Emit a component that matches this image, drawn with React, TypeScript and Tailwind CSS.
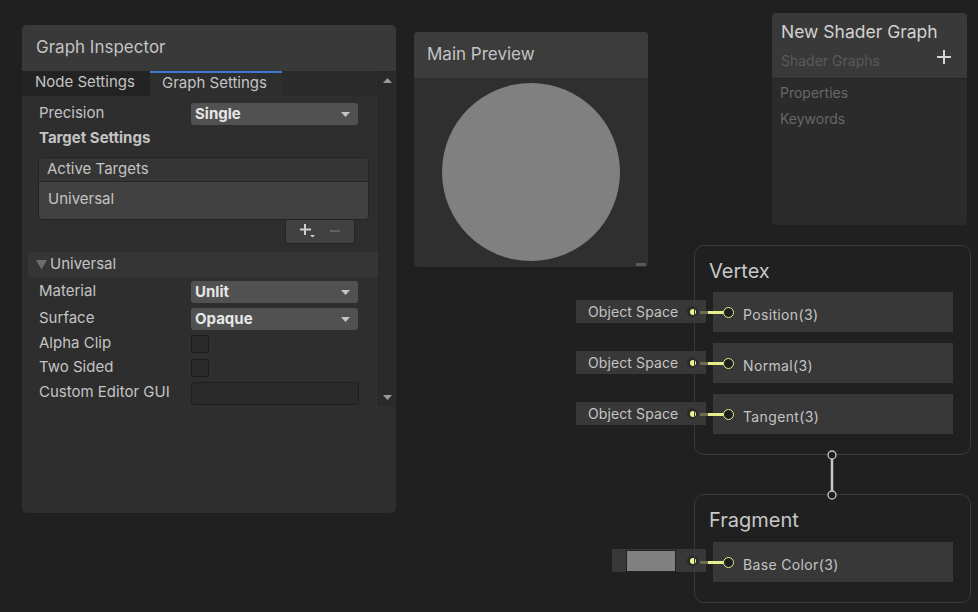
import React from 'react'

const Caret = () => (
  <svg width="9" height="5" viewBox="0 0 9 5">
    <path d="M0 0h9L4.5 5z" fill="#c4c4c4" />
  </svg>
)

function Dropdown({ value }: { value: string }) {
  return (
    <div className="flex h-[22px] w-[167px] items-center justify-between rounded-[3px] bg-[#515151] pl-[4px] pr-[8px] text-[15px] font-bold text-[#e6e6e6]">
      <span className="pt-[1px]">{value}</span>
      <Caret />
    </div>
  )
}

function Row({ label, children, className = '' }: { label: string; children: React.ReactNode; className?: string }) {
  return (
    <div className={`flex items-center pl-[17px] ${className}`}>
      <span className="-mt-[3px] w-[152px] text-[15px] leading-[18px] text-[#c4c4c4]">{label}</span>
      {children}
    </div>
  )
}

const Checkbox = () => <div className="h-[18px] w-[18px] rounded-[2px] border border-[#1c1c1c] bg-[#2a2a2a]" />

function Inspector() {
  return (
    <div className="absolute left-[22px] top-[25px] flex h-[488px] w-[374px] flex-col overflow-hidden rounded-[5px] bg-[#2e2e2e]">
      <div className="flex h-[46px] items-center bg-[#393939] pl-[14px] text-[17px] text-[#c4c4c4]">Graph Inspector</div>
      <div className="flex">
        <div className="flex w-[356px] flex-col">
          <div className="flex h-[25px] bg-[#2b2b2b] text-[15px] text-[#c4c4c4]">
            <div className="flex w-[128px] items-center bg-[#232323] pb-[2px] pl-[13px]">Node Settings</div>
            <div className="flex w-[132px] items-center border-t-2 border-[#3b7ad0] bg-[#2e2e2e] pb-[2px] pl-[12px]">Graph Settings</div>
          </div>
          <Row label="Precision" className="mt-[7px]">
            <Dropdown value="Single" />
          </Row>
          <div className="mt-[2px] flex h-[22px] items-center pt-[1px] pl-[17px] text-[15px] font-bold text-[#c4c4c4]">Target Settings</div>
          <div className="ml-[16px] mt-[8px] w-[331px] overflow-hidden rounded-[4px] border border-[#242424]">
            <div className="flex h-[24px] items-center border-b border-[#242424] bg-[#353535] pl-[8px] text-[15px] text-[#c4c4c4]">Active Targets</div>
            <div className="flex h-[37px] items-center bg-[#414141] pb-[2px] pl-[9px] text-[15px] text-[#c4c4c4]">Universal</div>
          </div>
          <div className="ml-[263px] flex h-[24px] w-[70px] items-center justify-center gap-[14px] rounded-b-[4px] border border-t-0 border-[#242424] bg-[#414141] pb-[2px]">
            <svg width="16" height="16" viewBox="0 0 16 16">
              <path d="M6 1v11M1 6.5h11" stroke="#d0d0d0" strokeWidth="2" />
              <path d="M11 12h5l-2.5 2.5z" fill="#d0d0d0" />
            </svg>
            <svg width="12" height="12" viewBox="0 0 12 12">
              <path d="M1 6h10" stroke="#6e6e6e" strokeWidth="1.5" />
            </svg>
          </div>
          <div className="ml-[6px] mt-[8px] flex h-[25px] items-center bg-[#353535] pl-[8px] text-[15px] text-[#c4c4c4]">
            <svg width="12" height="10" viewBox="0 0 12 10" className="mr-[2px]">
              <path d="M0 0h11L5.5 9.5z" fill="#6c6c6c" />
            </svg>
            Universal
          </div>
          <Row label="Material" className="mt-[4px]">
            <Dropdown value="Unlit" />
          </Row>
          <Row label="Surface" className="mt-[5px]">
            <Dropdown value="Opaque" />
          </Row>
          <Row label="Alpha Clip" className="mt-[5px]">
            <Checkbox />
          </Row>
          <Row label="Two Sided" className="mt-[6px]">
            <Checkbox />
          </Row>
          <Row label="Custom Editor GUI" className="mt-[5px]">
            <div className="h-[23px] w-[168px] rounded-[3px] border border-[#1f1f1f] bg-[#2a2a2a]" />
          </Row>
        </div>
        <div className="flex h-[335px] w-[17px] flex-col items-center justify-between border-l border-[#262626] bg-[#2a2a2a] pb-[6px] pt-[7px]">
          <svg width="9" height="5" viewBox="0 0 9 5">
            <path d="M0 5h9L4.5 0z" fill="#9a9a9a" />
          </svg>
          <svg width="9" height="5" viewBox="0 0 9 5">
            <path d="M0 0h9L4.5 5z" fill="#9a9a9a" />
          </svg>
        </div>
      </div>
    </div>
  )
}

function MainPreview() {
  return (
    <div className="absolute left-[414px] top-[32px] flex h-[235px] w-[234px] flex-col overflow-hidden rounded-[4px] bg-[#2f2f2f]">
      <div className="flex h-[46px] items-center bg-[#3c3c3c] pl-[13px] text-[17px] text-[#c4c4c4]">Main Preview</div>
      <div className="relative flex flex-1 justify-center pt-[5px]">
        <div className="h-[178px] w-[178px] rounded-full bg-[#808080]" />
        <div className="absolute bottom-[1px] right-[2px] h-[3px] w-[10px] bg-[#5a5a5a]" />
      </div>
    </div>
  )
}

function Blackboard() {
  return (
    <div className="absolute left-[772px] top-[13px] flex h-[212px] w-[195px] flex-col overflow-hidden rounded-[4px] bg-[#2b2b2b]">
      <div className="flex h-[66px] flex-col border-b border-[#232323] bg-[#393939] pl-[9px] pr-[16px] pt-[6px]">
        <span className="text-[17.5px] text-[#d2d2d2]">New Shader Graph</span>
        <div className="mt-[5px] flex items-center justify-between">
          <span className="text-[14px] text-[#5a5a5a]">Shader Graphs</span>
          <svg width="14" height="14" viewBox="0 0 14 14" className="-mt-[8px]">
            <path d="M7 0v14M0 7h14" stroke="#d6d6d6" strokeWidth="2" />
          </svg>
        </div>
      </div>
      <div className="flex flex-col gap-[5px] pl-[8px] pt-[3px] text-[14px] text-[#676767]">
        <span>Properties</span>
        <span>Keywords</span>
      </div>
    </div>
  )
}

function Slot({ label }: { label: string }) {
  return (
    <div className="relative flex h-[40px] w-[240px] items-center bg-[#383838] pl-[10px]">
      <div className="absolute -left-[13px] top-[19px] flex h-[2.5px]">
        <div className="w-[8px] bg-[#6a6b50]" />
        <div className="w-[16px] bg-[#e6ee8c]" />
      </div>
      <div className="relative h-[11px] w-[11px] rounded-full border-[1.5px] border-[#e6ee8c] bg-[#1e1e1e]" />
      <span className="ml-[9px] pt-[4px] text-[14px] tracking-[0.35px] text-[#c4c4c4]">{label}</span>
    </div>
  )
}

function InputChip({ children, width }: { children: React.ReactNode; width: string }) {
  return (
    <div className={`flex h-[23px] items-center justify-between bg-[#383838] pr-[8px] ${width}`}>
      {children}
      <div className="flex h-[11px] w-[11px] items-center justify-center rounded-full bg-[#2a2a2a]">
        <div className="h-[6px] w-[6px] rounded-full bg-[#eef592]" />
      </div>
    </div>
  )
}

function VertexNode() {
  const rows = ['Position(3)', 'Normal(3)', 'Tangent(3)']
  return (
    <>
      <div className="absolute left-[576px] top-[300px] flex flex-col gap-[28px]">
        {rows.map((r) => (
          <InputChip key={r} width="w-[130px]">
            <span className="pb-[1px] pl-[12px] text-[14px] tracking-[0.1px] text-[#c4c4c4]">Object Space</span>
          </InputChip>
        ))}
      </div>
      <div className="absolute left-[694px] top-[245px] h-[210px] w-[277px] rounded-[10px] border border-[#3a3a3a] pl-[14px] pt-[10px]">
        <div className="text-[20px] text-[#c8c8c8]">Vertex</div>
        <div className="ml-[4px] mt-[6px] flex flex-col gap-[11px]">
          {rows.map((r) => (
            <Slot key={r} label={r} />
          ))}
        </div>
      </div>
    </>
  )
}

function FragmentNode() {
  return (
    <>
      <div className="absolute left-[612px] top-[549px]">
        <InputChip width="w-[94px]">
          <div className="ml-[14px] h-[22px] w-[50px] border border-[#232323] bg-[#808080]" />
        </InputChip>
      </div>
      <div className="absolute left-[694px] top-[494px] h-[109px] w-[277px] rounded-[10px] border border-[#3a3a3a] pl-[14px] pt-[10px]">
        <div className="text-[20px] text-[#c8c8c8]">Fragment</div>
        <div className="ml-[4px] mt-[7px]">
          <Slot label="Base Color(3)" />
        </div>
      </div>
      <svg className="absolute left-[826px] top-[449px]" width="12" height="52" viewBox="0 0 12 52">
        <path d="M6 10v32" stroke="#c6c6c6" strokeWidth="2.5" />
        <circle cx="6" cy="6" r="4" fill="#1e1e1e" stroke="#c6c6c6" strokeWidth="1.3" />
        <circle cx="6" cy="46" r="4" fill="#1e1e1e" stroke="#c6c6c6" strokeWidth="1.3" />
      </svg>
    </>
  )
}

export default function App() {
  return (
    <div className="relative h-[612px] w-[978px] overflow-hidden bg-[#202020] font-['Inter',sans-serif]">
      <Inspector />
      <MainPreview />
      <Blackboard />
      <VertexNode />
      <FragmentNode />
    </div>
  )
}
